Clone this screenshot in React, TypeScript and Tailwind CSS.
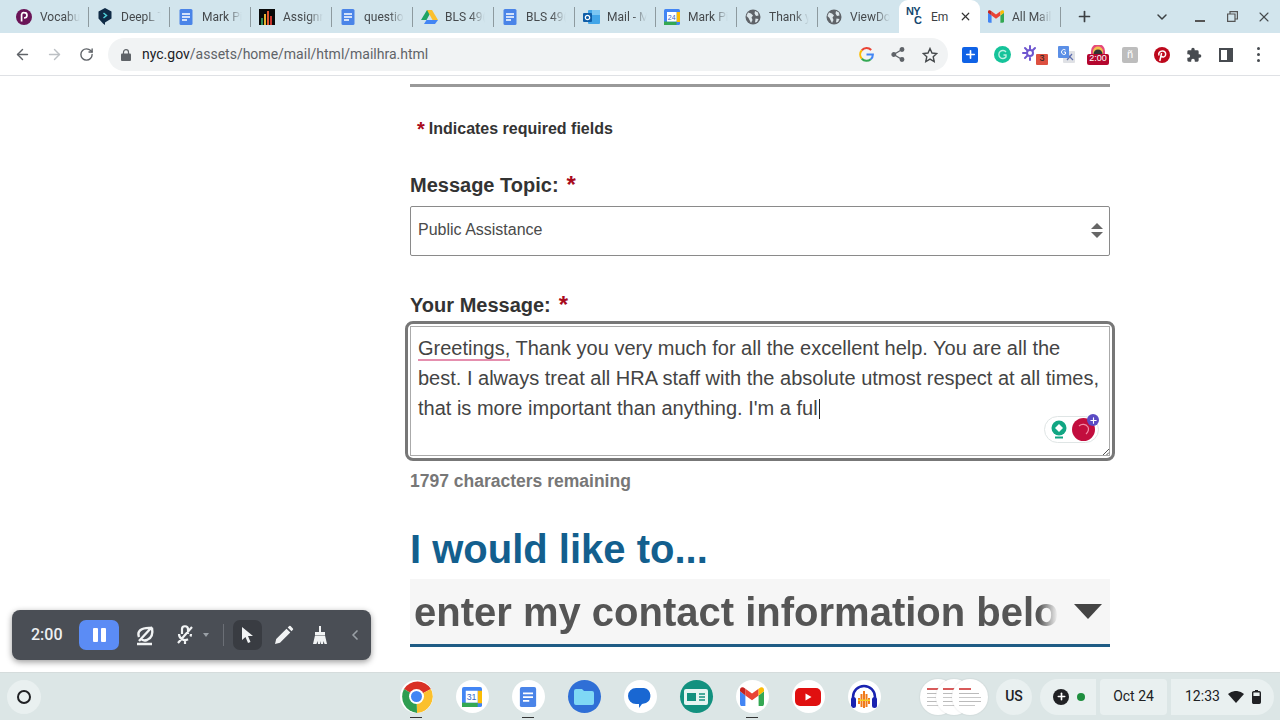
import type { ReactNode } from 'react'
import { ArrowLeft, ArrowRight, RotateCw, Plus, ChevronDown, X, ChevronLeft } from 'lucide-react'

const sans = "font-['Liberation_Sans',Arial,sans-serif]"

// ── Favicons ──────────────────────────────────────────────────

function Pearson() {
  return (
    <svg width="16" height="16" viewBox="0 0 16 16">
      <circle cx="8" cy="8" r="8" fill="#6a1457" />
      <path d="M5.6 12.5V5.4a2.4 2.4 0 0 1 2.6-1.7c1.7 0 2.8 1 2.8 2.6S9.800 9 8 9" fill="none" stroke="#fff" strokeWidth="1.700" />
    </svg>
  )
}

function DeepL() {
  return (
    <svg width="16" height="17" viewBox="0 0 16 17">
      <path d="M8 0l6.500 3.500v7L8 14.500V17l-2-1.500-4.500-5v-7z" fill="#0f2b46" />
      <path d="M6.500 5l3 2.500-3 2.500" fill="none" stroke="#4fd1d9" strokeWidth="1.500" />
    </svg>
  )
}

function Docs({ size = 16 }: { size?: number }) {
  return (
    <svg width={size} height={size} viewBox="0 0 16 16">
      <rect x="1.500" width="13" height="16" rx="1.500" fill="#4a84e8" />
      <path d="M4 5h8M4 8h8M4 11h5" stroke="#fff" strokeWidth="1.400" />
    </svg>
  )
}

function Bars() {
  return (
    <svg width="16" height="16" viewBox="0 0 16 16">
      <rect width="16" height="16" fill="#0a0a0a" />
      <rect x="2" y="9" width="2" height="7" fill="#2e8b57" />
      <rect x="5" y="5" width="2" height="11" fill="#e8b130" />
      <rect x="8" y="2" width="2" height="14" fill="#e2562d" />
      <rect x="11" y="7" width="2" height="9" fill="#c9362c" />
    </svg>
  )
}

function Drive() {
  return (
    <svg width="17" height="16" viewBox="0 0 17 16">
      <path d="M6 1h5l-5.500 10H0z" fill="#1fa463" />
      <path d="M6 1h5l6 10h-5.500z" fill="#fbc02d" />
      <path d="M3 15l2.500-4H17l-3 4z" fill="#4285f4" />
    </svg>
  )
}

function Outlook() {
  return (
    <svg width="17" height="16" viewBox="0 0 17 16">
      <rect x="5" y="1" width="12" height="14" rx="1" fill="#42a5e8" />
      <rect x="9" y="1" width="8" height="5" fill="#7cc6f3" />
      <rect y="4" width="9" height="9" rx="1" fill="#0f5ea8" />
      <circle cx="4.500" cy="8.500" r="2.200" fill="none" stroke="#fff" strokeWidth="1.200" />
    </svg>
  )
}

function Calendar({ size = 16, label = '24' }: { size?: number; label?: string }) {
  return (
    <svg width={size} height={size} viewBox="0 0 16 16">
      <rect width="16" height="16" rx="1.500" fill="#4285f4" />
      <rect x="12.500" y="3" width="3.500" height="10" fill="#fbbc04" />
      <rect y="12.500" width="12.500" height="3.500" fill="#34a853" />
      <rect x="3" y="3" width="9.500" height="9.500" fill="#fff" />
      <text x="7.700" y="10.500" fontSize="7" textAnchor="middle" fill="#3367c8" fontFamily="Liberation Sans, sans-serif">{label}</text>
    </svg>
  )
}

function Globe() {
  return (
    <svg width="16" height="16" viewBox="0 0 16 16">
      <circle cx="8" cy="8" r="7.500" fill="#5f6368" />
      <path d="M3 3.500l3 1 2 2-1.500 2 1 2.500L6 14 3.500 9 1.500 7zM10 2l3 1.500.5 3-2.500.5-1.500-2.500zM10.500 9.500l3 .5-1.500 3-2 .5z" fill="#dce6ea" />
    </svg>
  )
}

function Nyc() {
  return (
    <span className={`${sans} block h-[19px] w-[18px] text-[11px] font-bold leading-[9px] tracking-[-0.6px] text-[#14476f]`}>
      NY
      <br />
      <span className="ml-[8px]">C</span>
    </span>
  )
}

function Gmail({ size = 16 }: { size?: number }) {
  return (
    <svg width={size} height={size * 0.8} viewBox="0 0 20 16">
      <path d="M0 3.500V14a2 2 0 0 0 2 2h2.500V7z" fill="#4285f4" />
      <path d="M15.500 16H18a2 2 0 0 0 2-2V3.500L15.500 7z" fill="#34a853" />
      <path d="M4.500 7L10 11l5.500-4V1.500L10 5.500 4.500 1.500z" fill="#ea4335" />
      <path d="M0 3.500L4.500 7V1.500L3 .5A2 2 0 0 0 0 2z" fill="#c5221f" />
      <path d="M15.500 1.500V7L20 3.500V2a2 2 0 0 0-3-1.500z" fill="#fbbc04" />
    </svg>
  )
}

// ── Chrome bits ───────────────────────────────────────────────

const TABS: { icon: ReactNode; label: string; active?: boolean }[] = [
  { icon: <Pearson />, label: 'Vocabu' },
  { icon: <DeepL />, label: 'DeepL T' },
  { icon: <Docs />, label: 'Mark Pi' },
  { icon: <Bars />, label: 'Assignr' },
  { icon: <Docs />, label: 'questio' },
  { icon: <Drive />, label: 'BLS 49(' },
  { icon: <Docs />, label: 'BLS 49(' },
  { icon: <Outlook />, label: 'Mail - M' },
  { icon: <Calendar />, label: 'Mark Pi' },
  { icon: <Globe />, label: 'Thank y' },
  { icon: <Globe />, label: 'ViewDo' },
  { icon: <Nyc />, label: 'Em', active: true },
  { icon: <Gmail />, label: 'All Mail' },
]

function Tab({ icon, label, active, separator }: { icon: ReactNode; label: string; active?: boolean; separator: boolean }) {
  if (active) {
    return (
      <div className="flex h-[33px] w-[81px] shrink-0 items-center rounded-t-[9px] bg-white pl-[7px]">
        <span className="flex w-[25px] shrink-0">{icon}</span>
        <span className="w-[28px] overflow-hidden text-[12px] text-[#3c4043]">{label}</span>
        <X size={13} strokeWidth={2.2} className="text-[#333]" />
      </div>
    )
  }
  return (
    <div className="flex h-[33px] w-[81px] shrink-0 items-center pl-[8px]">
      <span className="flex w-[24px] shrink-0 justify-start">{icon}</span>
      <span className="w-[42px] overflow-hidden whitespace-nowrap text-[12px] text-[#45494c] [mask-image:linear-gradient(to_right,black_60%,transparent_95%)]">
        {label}
      </span>
      <span className={`ml-[6px] h-[20px] w-px ${separator ? 'bg-[#8d9a9f]' : ''}`} />
    </div>
  )
}

function GoogleG() {
  return (
    <svg width="15" height="15" viewBox="0 0 16 16" fill="none" strokeWidth="2.200">
      <path d="M13 3.200A6.800 6.800 0 0 0 3 3.500" stroke="#ea4335" />
      <path d="M3 3.500a6.800 6.800 0 0 0 0 9" stroke="#fbbc04" />
      <path d="M3 12.500a6.800 6.800 0 0 0 9.500.5" stroke="#34a853" />
      <path d="M12.500 13a6.500 6.500 0 0 0 2.300-5H8" stroke="#4285f4" />
    </svg>
  )
}

function ToolbarIcons() {
  return (
    <div className="flex items-center">
      <span className="flex w-[32px] justify-center">
        <span className="flex h-[16px] w-[16px] items-center justify-center rounded-[2px] bg-[#0f62e6]">
          <Plus size={13} strokeWidth={3} className="text-white" />
        </span>
      </span>
      <span className="flex w-[32px] justify-center">
        <svg width="17" height="17" viewBox="0 0 17 17">
          <circle cx="8.500" cy="8.500" r="8.500" fill="#15c39a" />
          <path d="M12 6a4 4 0 1 0 0 5V9H9.500" fill="none" stroke="#bdf0e2" strokeWidth="1.400" />
        </svg>
      </span>
      <span className="relative flex w-[32px] justify-center">
        <svg className="-translate-x-[4px] -translate-y-[2px]" width="16" height="16" viewBox="0 0 16 16" stroke="#6e56cf" strokeWidth="2" strokeLinecap="round">
          <path d="M8 1v3M3 3l2 2M1 8h3M3 13l2-2M13 3l-2 2M8 15v-2" />
          <circle cx="8" cy="8" r="3" fill="none" />
        </svg>
        <span className={`${sans} absolute left-[18px] top-[7px] flex h-[11px] w-[12px] items-center justify-center rounded-[1px] bg-[#dd5040] text-[9px] text-[#222]`}>3</span>
      </span>
      <span className="flex w-[32px] justify-center">
        <svg width="17" height="17" viewBox="0 0 17 17">
          <rect x="5" y="5" width="12" height="12" rx="1" fill="#dfe1e5" />
          <path d="M9 8l6 6M14 8l-5 6" stroke="#5f6fb0" strokeWidth="1.200" />
          <rect width="11" height="12" rx="1" fill="#5b8fe6" />
          <path d="M7.500 4a2.500 2.500 0 1 0 0 4V6H5.800" fill="none" stroke="#fff" strokeWidth="1" />
        </svg>
      </span>
      <span className="relative flex w-[32px] justify-center">
        <svg width="18" height="14" viewBox="0 0 18 14" className="mb-[6px]">
          <path d="M2 14V6a6 6 0 0 1 14 0v8z" fill="#e64a7b" />
          <path d="M4 14V6.500a5 5 0 0 1 10 0V14z" fill="#f2c14e" />
          <circle cx="9" cy="9" r="4.500" fill="#333" />
        </svg>
        <span className={`${sans} absolute left-[5px] top-[9px] flex h-[11px] w-[22px] items-center justify-center rounded-[2px] bg-[#b4062e] text-[9px] text-white`}>2:00</span>
      </span>
      <span className="flex w-[32px] justify-center">
        <span className={`${sans} flex h-[16px] w-[16px] items-center justify-center rounded-[2px] bg-[#bdbdbd] text-[11px] text-white`}>ñ</span>
      </span>
      <span className="flex w-[32px] justify-center">
        <svg width="16" height="16" viewBox="0 0 16 16">
          <circle cx="8" cy="8" r="8" fill="#bd081c" />
          <path d="M5.800 14l1.800-8M5 8.500c-1-2.500 1-4.500 3.300-4.500 2.300 0 3.700 1.500 3.300 3.800-.4 2-2.800 3-4.100 1.500" fill="none" stroke="#fff" strokeWidth="1.500" />
        </svg>
      </span>
      <span className="flex w-[32px] justify-center">
        <svg width="16" height="16" viewBox="0 0 24 24" fill="#474b50">
          <path d="M20.500 11H19V7a2 2 0 0 0-2-2h-4V3.500a2.500 2.500 0 0 0-5 0V5H4a2 2 0 0 0-2 2v3.800h1.500a2.700 2.700 0 0 1 0 5.400H2V20a2 2 0 0 0 2 2h3.800v-1.500a2.700 2.700 0 0 1 5.400 0V22H17a2 2 0 0 0 2-2v-4h1.500a2.500 2.500 0 0 0 0-5z" />
        </svg>
      </span>
      <span className="flex w-[32px] justify-center">
        <svg width="14" height="14" viewBox="0 0 14 14">
          <rect x="1" y="1" width="12" height="12" fill="none" stroke="#474b50" strokeWidth="2" />
          <rect x="8" y="1" width="5" height="12" fill="#474b50" />
        </svg>
      </span>
      <span className="flex w-[32px] flex-col items-center gap-[3px]">
        <span className="h-[3px] w-[3px] rounded-full bg-[#474b50]" />
        <span className="h-[3px] w-[3px] rounded-full bg-[#474b50]" />
        <span className="h-[3px] w-[3px] rounded-full bg-[#474b50]" />
      </span>
    </div>
  )
}

// ── Shelf ─────────────────────────────────────────────────────

function ShelfApp({ children, dot, bg = 'bg-white' }: { children: ReactNode; dot?: boolean; bg?: string }) {
  return (
    <div className="relative flex w-[56px] justify-center">
      <span className={`flex h-[33px] w-[33px] items-center justify-center overflow-hidden rounded-full ${bg}`}>{children}</span>
      {dot && <span className="absolute bottom-[-5px] left-[22px] h-[1px] w-[12px] bg-[#333]" />}
    </div>
  )
}

function ChromeLogo() {
  return (
    <svg width="33" height="33" viewBox="0 0 33 33">
      <path d="M16.500 16.500L4 9a16 16 0 0 1 27 0z" fill="#d93025" />
      <path d="M16.500 16.500L31 9a16.500 16.500 0 0 1-14 24z" fill="#fbc02d" />
      <path d="M16.500 16.500L17 33A16.500 16.500 0 0 1 4 9z" fill="#2f9e51" />
      <circle cx="16.500" cy="16.500" r="7.500" fill="#fff" />
      <circle cx="16.500" cy="16.500" r="5.500" fill="#4285f4" />
    </svg>
  )
}

function NoteThumb({ first }: { first?: boolean }) {
  return (
    <span className={`flex h-[36px] w-[36px] shrink-0 flex-col justify-center gap-[3px] rounded-full bg-white pl-[7px] shadow-[0_0_2px_rgba(0,0,0,0.12)] ${first ? '' : '-ml-[20px]'}`}>
      <span className="h-[2px] w-[12px] bg-[#d85a5a]" />
      <span className="h-px w-[20px] bg-[#bbb]" />
      <span className="h-px w-[22px] bg-[#c8c8c8]" />
      <span className="h-px w-[22px] bg-[#bbb]" />
      <span className="h-px w-[16px] bg-[#c8c8c8]" />
    </span>
  )
}

// ── Recorder bar ──────────────────────────────────────────────

function RecorderBar() {
  return (
    <div className={`${sans} absolute left-[12px] top-[610px] flex h-[50px] w-[359px] items-center rounded-[8px] bg-[#4a4e55] pl-[19px] text-white shadow-[0_2px_6px_rgba(0,0,0,0.4)]`}>
      <span className="w-[48px] font-['Roboto',sans-serif] text-[16px] font-medium text-[#eef0f2]">2:00</span>
      <span className="flex h-[30px] w-[40px] items-center justify-center gap-[3px] rounded-[7px] bg-[#5b8cf5]">
        <span className="h-[14px] w-[5px] rounded-[1px] bg-white" />
        <span className="h-[14px] w-[5px] rounded-[1px] bg-white" />
      </span>
      <svg className="ml-[15px]" width="22" height="22" viewBox="0 0 22 22" fill="none" stroke="#f1f3f4" strokeWidth="2.400">
        <path d="M18 4c1 5 0 10-5 12-3 1-5 0-6-1M5 13C3 8 6 3 18 4M3 20h15M5 17L18 3" />
      </svg>
      <svg className="ml-[20px]" width="18" height="20" viewBox="0 0 18 20" fill="none" stroke="#f1f3f4" strokeWidth="2.200">
        <path d="M6 9V4.500a3 3 0 0 1 6-.5v5M3 9a6 6 0 0 0 9 5.200M15 9a6 6 0 0 1-.6 2.500M9 15v4M2 18L16 2" />
      </svg>
      <span className="ml-[9px] h-0 w-0 border-x-[3px] border-t-[4px] border-x-transparent border-t-[#9aa0a6]" />
      <span className="ml-[14px] h-[22px] w-px bg-[#6b6f76]" />
      <span className="ml-[9px] flex h-[30px] w-[29px] items-center justify-center rounded-[7px] bg-[#393c42]">
        <svg width="14" height="18" viewBox="0 0 14 18" fill="#f1f3f4"><path d="M1 1v13l3.500-3 2.500 6 2.500-1-2.500-6H12z" /></svg>
      </span>
      <svg className="ml-[12px]" width="20" height="20" viewBox="0 0 20 20" fill="#f1f3f4">
        <path d="M1 19l1.200-5L12.500 3.700l3.800 3.800L6 17.800zM13.700 2.500l1.500-1.400a1 1 0 0 1 1.400 0l2.300 2.300a1 1 0 0 1 0 1.400l-1.400 1.500z" />
      </svg>
      <svg className="ml-[18px]" width="16" height="20" viewBox="0 0 16 20" fill="#f1f3f4">
        <rect x="7" y="1" width="2" height="7" />
        <rect x="3" y="7" width="10" height="3" />
        <path d="M3 10.500h10l2 8.500h-2.500l-1-3-.5 3H9l-.5-3-.5 3H6l-.5-3-1 3H1z" />
      </svg>
      <ChevronLeft size={16} strokeWidth={2.500} className="ml-[19px] text-[#9aa0a6]" />
    </div>
  )
}

// ── Page ──────────────────────────────────────────────────────

function Asterisk({ className }: { className: string }) {
  return <span className={`font-bold text-[#a80b1d] ${className}`}>*</span>
}

export default function App() {
  return (
    <div className="relative flex h-[720px] w-[1280px] flex-col overflow-hidden bg-white font-['Roboto',sans-serif]">
      {/* tab strip */}
      <div className="flex h-[33px] shrink-0 items-center bg-[#d2e5ed]">
        <div className="flex w-[8px] shrink-0" />
        {TABS.map((t, i) => (
          <Tab key={i} {...t} separator={!t.active && !TABS[i + 1]?.active} />
        ))}
        <Plus size={17} strokeWidth={2.4} className="ml-[15px] text-[#3c4043]" />
        <ChevronDown size={16} strokeWidth={2.2} className="ml-[61px] text-[#3c4043]" />
        <span className="ml-[25px] mt-[9px] h-[2px] w-[10px] bg-[#555]" />
        <svg className="ml-[22px]" width="11" height="11" viewBox="0 0 11 11" fill="none" stroke="#555" strokeWidth="1.200">
          <path d="M3 2.500V.6h7.400V8H8.500M.6 3h7.400v7.400H.6z" />
        </svg>
        <X size={16} strokeWidth={1.600} className="ml-[18px] text-[#45494c]" />
      </div>

      {/* toolbar */}
      <div className="flex h-[43px] shrink-0 items-center border-b border-[#dfe1e5] bg-white pt-[1px]">
        <ArrowLeft size={17} strokeWidth={2} className="ml-[14px] text-[#5f6368]" />
        <ArrowRight size={17} strokeWidth={2} className="ml-[15px] text-[#bcc0c4]" />
        <RotateCw size={15} strokeWidth={2.200} className="ml-[16px] text-[#5f6368]" />
        <div className="ml-[14px] flex h-[33px] w-[840px] items-center rounded-full bg-[#f1f3f4] pl-[13px] pr-[10px] text-[14px]">
          <svg width="10" height="12" viewBox="0 0 10 12" fill="#5f6368">
            <rect y="4.500" width="10" height="7.500" rx="1" />
            <path d="M2.500 5V3.200a2.500 2.500 0 0 1 5 0V5" fill="none" stroke="#5f6368" strokeWidth="1.200" />
          </svg>
          <span className="ml-[11px] text-[#202124]">nyc.gov</span>
          <span className="text-[#5f6368]">/assets/home/mail/html/mailhra.html</span>
          <span className="ml-auto flex items-center gap-[17px]">
            <GoogleG />
            <svg width="14" height="15" viewBox="0 0 14 15" fill="#5f6368" stroke="#5f6368" strokeWidth="1.300">
              <circle cx="11" cy="2.500" r="1.800" />
              <circle cx="2.800" cy="7.500" r="1.800" />
              <circle cx="11" cy="12.500" r="1.800" />
              <path d="M11 2.500L2.800 7.500l8.200 5" fill="none" />
            </svg>
            <svg width="16" height="16" viewBox="0 0 16 16" fill="none" stroke="#45494c" strokeWidth="1.400">
              <path d="M8 1.500l2 4.500 4.800.5-3.600 3.200 1 4.800L8 12.100l-4.200 2.400 1-4.800L1.200 6.500 6 6z" />
            </svg>
          </span>
        </div>
        <div className="ml-[6px]">
          <ToolbarIcons />
        </div>
      </div>

      {/* page */}
      <div className={`${sans} flex min-h-0 flex-1 flex-col overflow-hidden pl-[410px] text-[#333]`}>
        <div className="w-[700px]">
          <div className="mt-[8px] h-[3px] bg-[#999]" />
          <p className="mt-[32px] flex h-[20px] items-center pl-[7px] text-[16px] font-bold leading-[20px]">
            <Asterisk className="mr-[4px] text-[20px]" />
            Indicates required fields
          </p>
          <p className="mt-[33px] flex h-[26px] items-center text-[20px] font-bold leading-[26px]">
            Message Topic:
            <Asterisk className="ml-[8px] text-[24px]" />
          </p>
          <div className="mt-[8px] flex h-[50px] items-center justify-between rounded-[2px] border border-[#8a8a8a] pb-[2px] pl-[7px] pr-[6px] text-[16px] text-[#4a4a4a]">
            Public Assistance
            <span className="flex flex-col gap-[3px]">
              <span className="h-0 w-0 border-x-[6px] border-b-[6px] border-x-transparent border-b-[#666]" />
              <span className="h-0 w-0 border-x-[6px] border-t-[6px] border-x-transparent border-t-[#666]" />
            </span>
          </div>
          <p className="mt-[36px] flex h-[26px] items-center text-[20px] font-bold leading-[26px]">
            Your Message:
            <Asterisk className="ml-[8px] text-[24px]" />
          </p>
          <div className="relative mt-[3px] -mx-[5px] rounded-[8px] border-[3px] border-[#777] p-[2px]">
            <div className="h-[130px] border border-[#aaa] px-[7px] py-[6px] text-[20px] leading-[30px] text-[#444]">
              <span className="border-b-2 border-[#e58fae] leading-[20px]">Greetings,</span> Thank you very much for all the excellent help. You are all the best. I always treat all HRA staff with the absolute utmost respect at all times, that is more important than anything. I'm a ful
              <span className="ml-px inline-block h-[20px] w-px translate-y-[4px] bg-[#222]" />
            </div>
            {/* grammarly widget over the field */}
            <span className="absolute bottom-[15px] right-[13px] flex h-[27px] w-[55px] items-center justify-between rounded-full border border-[#dfe5e5] bg-white pl-[6px] pr-[3px]">
              <svg width="16" height="20" viewBox="0 0 16 20">
                <circle cx="8" cy="8" r="7.500" fill="#11a683" />
                <path d="M8 4l4 4-4 4-4-4z" fill="#fff" />
                <rect x="4" y="16.500" width="8" height="2" fill="#11a683" />
              </svg>
              <svg width="23" height="23" viewBox="0 0 23 23">
                <circle cx="11.500" cy="11.500" r="11.500" fill="#c20e3e" />
                <path d="M7 8a6 6 0 0 1 9 1c1 2 0 5-2 7" fill="none" stroke="#f28aa5" strokeWidth="1.200" />
              </svg>
            </span>
            <span className="absolute bottom-[32px] right-[13px] flex h-[12px] w-[12px] items-center justify-center rounded-full bg-[#5b4bc4]">
              <Plus size={9} strokeWidth={3} className="text-white" />
            </span>
            <svg className="absolute bottom-[2px] right-[2px]" width="8" height="8" viewBox="0 0 8 8" stroke="#555" strokeWidth="1">
              <path d="M1 7l6-6M4.500 7L7 4.500" />
            </svg>
          </div>
          <p className="mt-[9px] text-[17.500px] font-bold leading-[22px] text-[#777]">1797 characters remaining</p>
          <h2 className="mt-[34px] text-[40px] font-bold leading-[46px] text-[#135f8e]">I would like to...</h2>
          <div className="mt-[7px] flex h-[68px] items-center justify-between border-b-[3px] border-[#1f5c85] bg-[#f6f6f6] pl-[4px] pr-[8px]">
            <span className="w-[644px] overflow-hidden whitespace-nowrap text-[40px] font-bold text-[#555] [mask-image:linear-gradient(to_right,black_97%,transparent)]">
              enter my contact information below
            </span>
            <span className="h-0 w-0 border-x-[14px] border-t-[15px] border-x-transparent border-t-[#444]" />
          </div>
        </div>
      </div>

      <RecorderBar />

      {/* shelf */}
      <div className="flex h-[48px] shrink-0 items-center border-t border-[#d5dcdc] bg-[#dce6e6] font-['Roboto',sans-serif] text-[#202124]">
        <span className="ml-[7px] flex h-[34px] w-[34px] items-center justify-center rounded-full bg-[#e9f0f0]">
          <span className="h-[14px] w-[14px] rounded-full border-[2px] border-[#202124]" />
        </span>
        <div className="ml-[347px] flex items-center">
          <ShelfApp dot><ChromeLogo /></ShelfApp>
          <ShelfApp><Calendar size={20} label="31" /></ShelfApp>
          <ShelfApp dot><Docs size={20} /></ShelfApp>
          <ShelfApp bg="bg-[#2f6fd6]">
            <svg width="20" height="16" viewBox="0 0 20 16"><path d="M0 2a2 2 0 0 1 2-2h6l2 2h8a2 2 0 0 1 2 2v10a2 2 0 0 1-2 2H2a2 2 0 0 1-2-2z" fill="#7fd8f5" /></svg>
          </ShelfApp>
          <ShelfApp>
            <svg width="24" height="24" viewBox="0 0 24 24"><path d="M8 3h8a8 8 0 0 1 2 15l-4 1 -3 4v-4H8A8 8 0 0 1 8 3z" fill="#1967d2" /></svg>
          </ShelfApp>
          <ShelfApp bg="bg-[#12917f]">
            <svg width="24" height="16" viewBox="0 0 24 16">
              <rect width="24" height="16" rx="2" fill="#e6f5f2" />
              <rect x="3" y="4" width="9" height="8" fill="#12917f" />
              <path d="M15 5h6M15 8h6M15 11h6" stroke="#12917f" strokeWidth="1.500" />
            </svg>
          </ShelfApp>
          <ShelfApp dot><Gmail size={24} /></ShelfApp>
          <ShelfApp>
            <svg width="26" height="18" viewBox="0 0 26 18">
              <rect width="26" height="18" rx="5" fill="#e01010" />
              <path d="M10.500 5.500l6 3.500-6 3.500z" fill="#fff" />
            </svg>
          </ShelfApp>
          <ShelfApp>
            <svg width="28" height="26" viewBox="0 0 28 26">
              <path d="M3 16v-3a11 11 0 0 1 22 0v3" fill="none" stroke="#1a23b0" strokeWidth="2.500" />
              <rect x="1" y="13" width="5" height="11" rx="2.500" fill="#1a23b0" />
              <rect x="22" y="13" width="5" height="11" rx="2.500" fill="#1a23b0" />
              <path d="M8 14h2v6H8zM10.500 10h2v13h-2zM13 7h2v17h-2zM15.500 10h2v13h-2zM18 14h2v6h-2z" fill="#f07a1a" />
              <rect x="8" y="15.500" width="12" height="1.500" fill="#f5d020" />
            </svg>
          </ShelfApp>
        </div>
        <div className="ml-[28px] flex h-[36px] w-[68px] items-center">
          <NoteThumb first />
          <NoteThumb />
          <NoteThumb />
        </div>
        <span className="ml-[8px] flex h-[36px] w-[36px] items-center justify-center rounded-full bg-[#e9f0f0] text-[14px] font-medium">US</span>
        <span className="ml-[8px] flex h-[36px] w-[56px] items-center gap-[8px] rounded-l-full rounded-r-[4px] bg-[#e9f0f0] pl-[13px]">
          <span className="flex h-[16px] w-[16px] items-center justify-center rounded-full bg-[#202124]">
            <Plus size={11} strokeWidth={3.500} className="text-white" />
          </span>
          <span className="h-[8px] w-[8px] rounded-full bg-[#1e8e3e]" />
        </span>
        <span className="ml-[4px] flex h-[36px] w-[67px] items-center justify-center rounded-[4px] bg-[#e9f0f0] text-[14px]">Oct 24</span>
        <span className="ml-[4px] flex h-[36px] w-[103px] items-center rounded-l-[4px] rounded-r-full bg-[#e9f0f0] pl-[14px] text-[14px]">
          12:33
          <svg className="ml-[8px]" width="16" height="12" viewBox="0 0 16 12" fill="#202124"><path d="M0 3a12 12 0 0 1 16 0L8 12z" /></svg>
          <svg className="ml-[8px]" width="9" height="14" viewBox="0 0 9 14">
            <rect x="3" width="3" height="2" fill="#202124" />
            <rect x=".7" y="1.700" width="7.600" height="11.600" rx="1" fill="none" stroke="#202124" strokeWidth="1.400" />
            <rect x="1" y="6" width="7" height="7" fill="#202124" />
          </svg>
        </span>
      </div>
    </div>
  )
}
